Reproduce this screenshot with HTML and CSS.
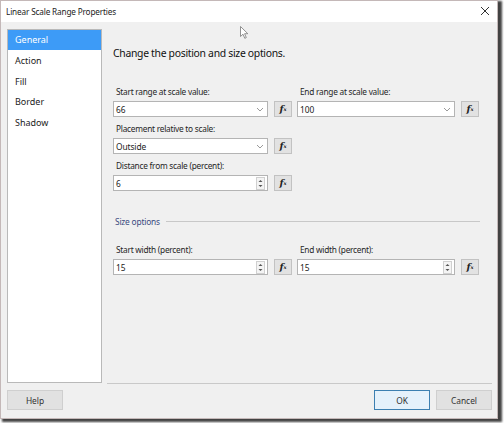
FILE: index.html
```html
<!DOCTYPE html>
<html>
<head>
<meta charset="utf-8">
<link rel="stylesheet" href="styles.css">
</head>
<body>
<div class="window">
  <div class="titlebar">
    <span class="title">Linear Scale Range Properties</span>
    <svg class="close" width="10" height="10" viewBox="0 0 10 10"><path d="M1 1L9 9M9 1L1 9" stroke="#333" stroke-width="1" fill="none"/></svg>
  </div>
  <div class="main">
    <ul class="nav">
      <li class="sel">General</li>
      <li>Action</li>
      <li>Fill</li>
      <li>Border</li>
      <li>Shadow</li>
    </ul>
    <div class="page">
      <h1 class="heading">Change the position and size options.</h1>
      <div class="grid">
        <div class="field">
          <label>Start range at scale value:</label>
          <div class="ctl">
            <div class="box wide1"><span>66</span><svg class="chev" width="8" height="5" viewBox="0 0 8 5"><path d="M1 1L4 4L7 1" stroke="#9a9a9a" fill="none"/></svg></div>
            <div class="fx"><i>f</i><sub>x</sub></div>
          </div>
        </div>
        <div class="field">
          <label>End range at scale value:</label>
          <div class="ctl">
            <div class="box wide2"><span>100</span><svg class="chev" width="8" height="5" viewBox="0 0 8 5"><path d="M1 1L4 4L7 1" stroke="#9a9a9a" fill="none"/></svg></div>
            <div class="fx"><i>f</i><sub>x</sub></div>
          </div>
        </div>
        <div class="field">
          <label>Placement relative to scale:</label>
          <div class="ctl">
            <div class="box wide1"><span>Outside</span><svg class="chev" width="8" height="5" viewBox="0 0 8 5"><path d="M1 1L4 4L7 1" stroke="#9a9a9a" fill="none"/></svg></div>
            <div class="fx"><i>f</i><sub>x</sub></div>
          </div>
        </div>
        <div class="field empty"></div>
        <div class="field">
          <label>Distance from scale (percent):</label>
          <div class="ctl">
            <div class="box wide1"><span>6</span><svg class="spin" width="9" height="13" viewBox="0 0 9 13"><rect x="0.5" y="0.5" width="8" height="12" fill="#f4f4f4" stroke="#d0d0d0"/><path d="M2.5 5L4.5 3L6.5 5Z M2.5 8L4.5 10L6.5 8Z" fill="#555"/></svg></div>
            <div class="fx"><i>f</i><sub>x</sub></div>
          </div>
        </div>
      </div>
      <div class="section"><span>Size options</span><div class="rule"></div></div>
      <div class="grid">
        <div class="field">
          <label>Start width (percent):</label>
          <div class="ctl">
            <div class="box wide1"><span>15</span><svg class="spin" width="9" height="13" viewBox="0 0 9 13"><rect x="0.5" y="0.5" width="8" height="12" fill="#f4f4f4" stroke="#d0d0d0"/><path d="M2.5 5L4.5 3L6.5 5Z M2.5 8L4.5 10L6.5 8Z" fill="#555"/></svg></div>
            <div class="fx"><i>f</i><sub>x</sub></div>
          </div>
        </div>
        <div class="field">
          <label>End width (percent):</label>
          <div class="ctl">
            <div class="box wide2"><span>15</span><svg class="spin" width="9" height="13" viewBox="0 0 9 13"><rect x="0.5" y="0.5" width="8" height="12" fill="#f4f4f4" stroke="#d0d0d0"/><path d="M2.5 5L4.5 3L6.5 5Z M2.5 8L4.5 10L6.5 8Z" fill="#555"/></svg></div>
            <div class="fx"><i>f</i><sub>x</sub></div>
          </div>
        </div>
      </div>
    </div>
  </div>
  <div class="footer">
    <button class="btn">Help</button>
    <div class="spacer"></div>
    <button class="btn ok">OK</button>
    <button class="btn">Cancel</button>
  </div>
  <svg class="cursor" width="10" height="14" viewBox="0 0 10 14"><path d="M0.5 0.5L0.5 10.5L3 8.2L4.8 12.3L6.3 11.6L4.6 7.7L7.8 7.7Z" fill="#fff" stroke="#777" stroke-width="0.8"/></svg>
</div>
</body>
</html>
```
FILE: styles.css
```css
* { box-sizing: border-box; }
html, body { margin: 0; padding: 0; }
body {
  background: #fff;
  font-family: "Noto Sans", "Open Sans", sans-serif;
  color: #1e1e1e;
  width: 504px;
  height: 423px;
  overflow: hidden;
}
.window {
  position: relative;
  width: 498px;
  height: 419px;
  background: #f0f0f0;
  border: 1px solid #c4b8b8;
  box-shadow: 3px 2px 2px 1px rgba(45, 45, 45, 0.9);
  display: flex;
  flex-direction: column;
}
.titlebar {
  height: 21px;
  background: #fff;
  display: flex;
  align-items: center;
  justify-content: space-between;
  padding: 0 7px 1px 5px;
}
.title {
  font-size: 8.2px;
  color: #222;
  letter-spacing: -0.15px;
}
.close { display: block; }
.main {
  display: flex;
  gap: 5px;
  padding: 7px 5px 0 6px;
  height: 362px;
}
.nav {
  list-style: none;
  margin: 0;
  padding: 0;
  width: 95px;
  height: 354px;
  background: #fff;
  border: 1px solid #b9b9b9;
  font-size: 9px;
}
.nav li {
  height: 20.5px;
  line-height: 20px;
  padding: 1px 0 0 7px;
  color: #222;
}
.nav li.sel {
  background: #3d9bf7;
  color: #fff;
  height: 20px;
  padding-top: 0;
}
.page {
  flex: 1;
  height: 355px;
  border-bottom: 1px solid #c9c9c9;
  padding-left: 6px;
}
.heading {
  margin: 17px 0 0 0;
  font-weight: normal;
  font-size: 10.4px;
  line-height: 14px;
  color: #111;
  letter-spacing: -0.3px;
}
.grid {
  display: grid;
  grid-template-columns: 179px 182px;
  column-gap: 5px;
  row-gap: 6px;
}
.heading + .grid { margin-top: 26px; }
.field { height: 31px; }
.field label {
  display: block;
  font-size: 8.3px;
  line-height: 12px;
  height: 12px;
  margin: 0 0 3px 3px;
  color: #262626;
  letter-spacing: -0.25px;
}
.ctl {
  display: flex;
  gap: 6px;
  height: 16px;
}
.box {
  height: 16px;
  background: #fff;
  border: 1px solid #b4b4b4;
  display: flex;
  align-items: center;
  justify-content: space-between;
  padding: 0 2px 0 2px;
  font-size: 8.4px;
  color: #222;
  letter-spacing: -0.1px;
}
.wide1 { width: 155px; }
.wide2 { width: 158px; }
.chev { margin-right: 1px; }
.fx {
  width: 18px;
  height: 16px;
  background: #e2e2e2;
  border: 1px solid #c2c2c2;
  font-family: "DejaVu Serif", "Liberation Serif", serif;
  font-weight: bold;
  font-size: 9.5px;
  color: #222;
  display: flex;
  align-items: center;
  justify-content: center;
  line-height: 1;
}
.fx i { font-style: italic; }
.fx sub { font-size: 5px; vertical-align: -1px; font-style: italic; }
.section {
  display: flex;
  align-items: center;
  margin-top: 24px;
  height: 12px;
  gap: 6px;
  width: 367px;
}
.section span {
  font-size: 8.4px;
  color: #3a4a80;
  margin-left: 2px;
  white-space: nowrap;
  letter-spacing: -0.2px;
}
.rule {
  flex: 1;
  height: 1px;
  background: #c8c8c8;
}
.section + .grid { margin-top: 17px; }
.footer {
  display: flex;
  gap: 6px;
  padding: 6px 5px 0 6px;
}
.spacer { flex: 1; }
.btn {
  width: 56px;
  height: 20px;
  background: #e1e1e1;
  border: 1px solid #cfcfcf;
  font-family: "Noto Sans", "Open Sans", sans-serif;
  font-size: 8.4px;
  color: #333;
  padding: 0;
}
.btn.ok {
  border: 1px solid #3c7fb1;
  background: #e5f1fb;
}
.cursor {
  position: absolute;
  left: 239px;
  top: 25px;
}
```
